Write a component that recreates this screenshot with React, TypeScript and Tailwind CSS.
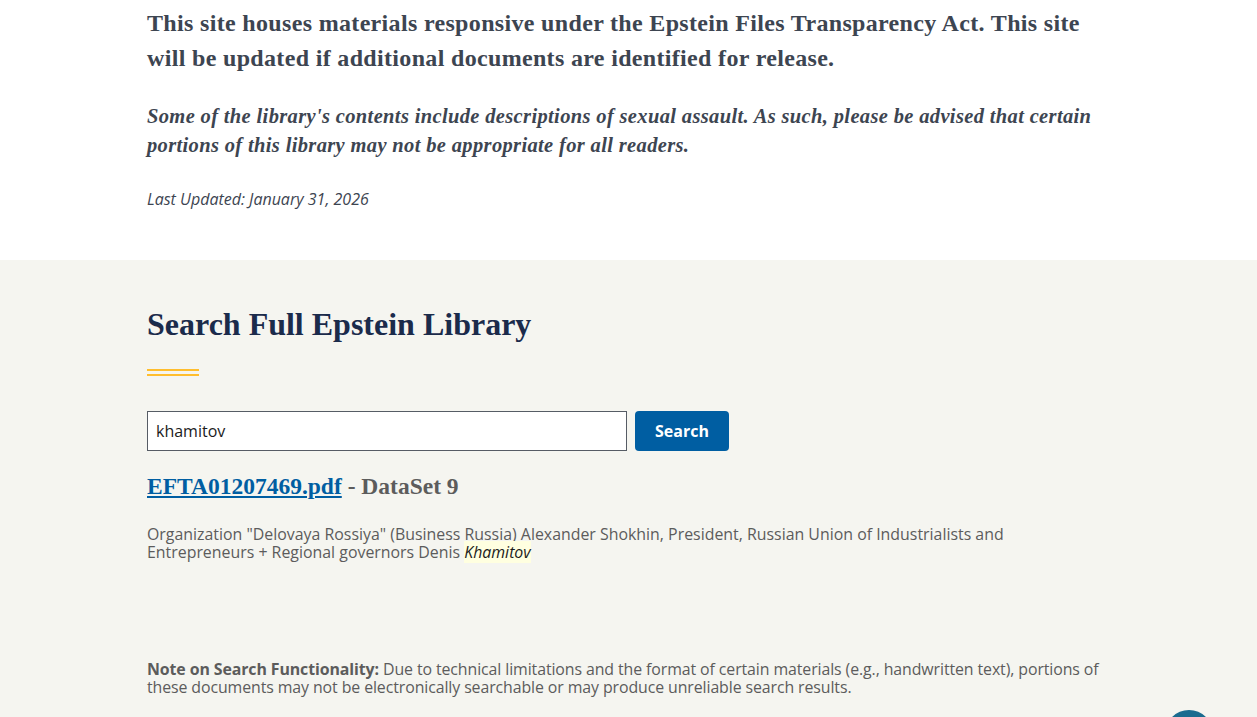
import React from 'react';

const serif = "font-['Liberation_Serif',serif]";
const sans = "font-['Open_Sans',sans-serif]";

export default function App() {
  return (
    <div className={`min-h-screen bg-[#f5f5f0] ${sans}`}>
      <section className="bg-white">
        <div className="mx-auto max-w-[963px] pb-[51px]">
          <p className={`${serif} pt-[6px] text-[24px] font-bold leading-[35px] tracking-[0.33px] text-[#3d4551]`}>
            This site houses materials responsive under the Epstein Files Transparency Act. This site will be updated
            if additional documents are identified for release.
          </p>
          <p className={`${serif} mt-[26px] text-[20.5px] font-bold italic leading-[29px] tracking-[0.35px] text-[#3d4551]`}>
            Some of the library's contents include descriptions of sexual assault. As such, please be advised that
            certain portions of this library may not be appropriate for all readers.
          </p>
          <p className="mt-[29px] text-[16px] italic leading-[20px] text-[#3d4551]">Last Updated: January 31, 2026</p>
        </div>
      </section>

      <section className="relative">
        <div className="mx-auto max-w-[963px] pt-[44px] pb-[20px]">
          <h2 className={`${serif} text-[32px] font-bold leading-[40px] text-[#1b2b4b]`}>Search Full Epstein Library</h2>
          <div className="mt-[25px] h-[7px] w-[52px] border-y-2 border-[#ffbe2e]" />

          <form className="mt-[35px] flex gap-2" onSubmit={e => e.preventDefault()}>
            <input
              defaultValue="khamitov"
              className="h-[40px] w-[480px] border border-[#565c65] bg-white px-2 text-[16px] text-[#1b1b1b] outline-none"
            />
            <button className="h-[40px] w-[94px] rounded-[4px] bg-[#005ea2] text-[16px] font-bold text-white">Search</button>
          </form>

          <h3 className={`${serif} mt-[20px] text-[23.5px] font-bold leading-[30px] text-[#5c5c5c]`}>
            <a href="#" className="text-[#005ea2] underline underline-offset-2">EFTA01207469.pdf</a> - DataSet 9
          </h3>
          <p className="mt-[24px] text-[15.9px] leading-[18px] text-[#5c5c5c]">
            Organization "Delovaya Rossiya" (Business Russia) Alexander Shokhin, President, Russian Union of
            Industrialists and Entrepreneurs + Regional governors Denis{' '}
            <em className="bg-[#ffffe0] text-[#1b1b1b]">Khamitov</em>
          </p>

          <p className="mt-[99px] text-[15.9px] leading-[18px] tracking-[-0.1px] text-[#5c5c5c]">
            <strong>Note on Search Functionality:</strong> Due to technical limitations and the format of certain
            materials (e.g., handwritten text), portions of these documents may not be electronically searchable or may
            produce unreliable search results.
          </p>
        </div>
        <button
          aria-label="Back to top"
          className="absolute right-[44px] top-[450px] h-[48px] w-[48px] rounded-full bg-[#1a6b8f]"
        />
      </section>
    </div>
  );
}
